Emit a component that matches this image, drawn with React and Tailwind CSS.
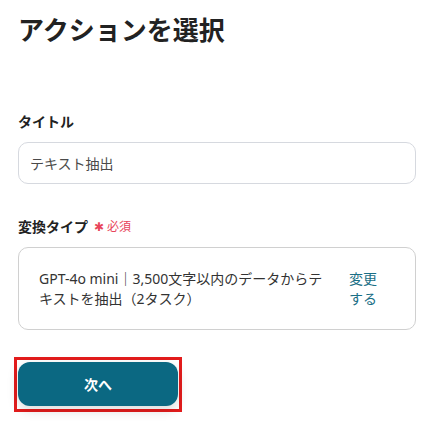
export default function App() {
    return (
        <div className="w-[434px] h-[421px] bg-white px-[18px] pt-[12px] font-['Noto_Sans','Noto_Sans_CJK_JP',sans-serif] text-[#333333]">
            <h1 className="text-[26px] font-bold leading-[36px] text-[#222222]">アクションを選択</h1>

            {/* Title field */}
            <div className="mt-[64px]">
                <label className="block text-[14px] font-bold leading-[20px] text-[#222222]">タイトル</label>
                <div className="mt-[10px] h-[42px] rounded-[10px] border border-[#d6d9df] px-[11px] flex items-center text-[14px] text-[#4a4a4a]">
                    テキスト抽出
                </div>
            </div>

            {/* Conversion type */}
            <div className="mt-[33px]">
                <div className="flex items-center gap-[6px]">
                    <span className="text-[14px] font-bold leading-[20px] text-[#222222]">変換タイプ</span>
                    <span className="text-[12px] leading-[20px] text-[#e8455a]">✱ 必須</span>
                </div>
                <div className="mt-[10px] h-[83px] rounded-[10px] border border-[#d0d0d0] pl-[20px] pr-[38px] flex items-center">
                    <p className="flex-1 text-[14px] leading-[20px] text-[#333333]">
                        GPT-4o mini｜3,500文字以内のデータからテキストを抽出（2タスク）
                    </p>
                    <span className="ml-[14px] w-[28px] text-[14px] leading-[20px] text-[#1a6f86]">変更する</span>
                </div>
            </div>

            {/* Next button */}
            <div className="mt-[27px] -ml-[4px] inline-block border-[3px] border-[#e31c1c] px-[1px] pt-[2px] pb-[3px]">
                <button className="block w-[160px] h-[44px] rounded-[12px] bg-[#0b6882] text-white text-[14px] font-bold shadow-[0_4px_12px_rgba(0,0,0,0.15)]">
                    次へ
                </button>
            </div>
        </div>
    );
}
